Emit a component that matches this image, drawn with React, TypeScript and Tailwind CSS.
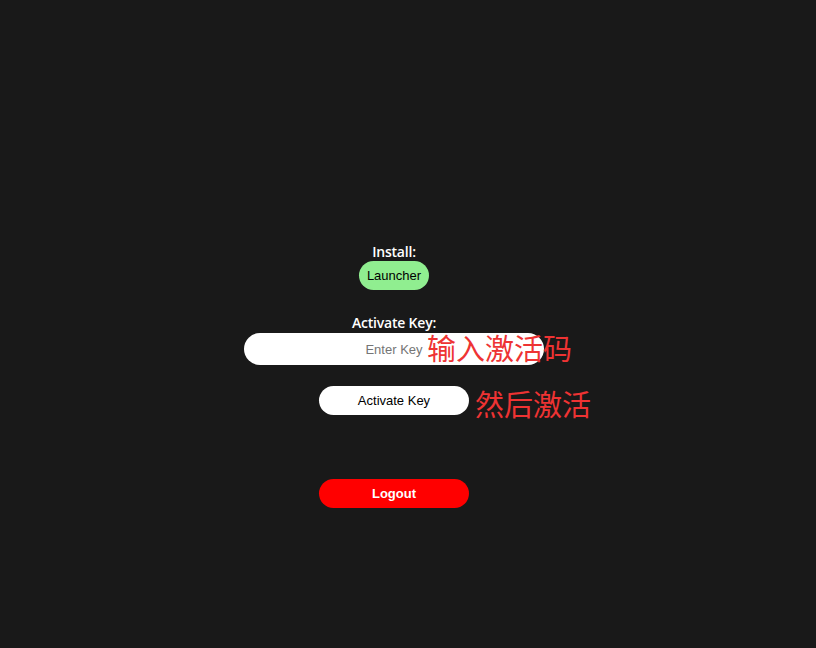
import { useState } from 'react'

const LABEL_FONT = { fontFamily: '"Open Sans", "Noto Sans", sans-serif' }

export default function App() {
  const [key, setKey] = useState('')

  return (
    <div className="min-h-[648px] w-full bg-[#191919] flex flex-col items-center pt-[242px] pr-[28px] font-['Liberation_Sans',Arial,sans-serif]">
      {/* install */}
      <div className="text-white text-[14px] font-semibold leading-[19px] tracking-[-0.2px]" style={LABEL_FONT}>
        Install:
      </div>
      <button className="h-[29px] w-[70px] rounded-full bg-[#90ee90] text-[13px] text-black font-['Liberation_Sans']">
        Launcher
      </button>

      {/* activate */}
      <div className="mt-[23px] text-white text-[14px] font-semibold leading-[20px] tracking-[-0.2px]" style={LABEL_FONT}>
        Activate Key:
      </div>
      <div className="relative">
        <input
          type="text"
          value={key}
          onChange={(e) => setKey(e.target.value)}
          placeholder="Enter Key"
          className="block h-[32px] w-[300px] rounded-full bg-white text-center text-[13px] text-black placeholder:text-[#757575] outline-none font-['Liberation_Sans']"
        />
        <span className="absolute left-[183px] top-[-5px] whitespace-nowrap text-[29px] leading-[38px] text-[#ee3333] font-['Noto_Sans_CJK_SC',sans-serif]">
          输入激活码
        </span>
      </div>

      <div className="relative mt-[21px]">
        <button className="h-[29px] w-[150px] rounded-full bg-white text-[13px] text-black font-['Liberation_Sans']">
          Activate Key
        </button>
        <span className="absolute left-[156px] top-[-2px] whitespace-nowrap text-[29px] leading-[38px] text-[#ee3333] font-['Noto_Sans_CJK_SC',sans-serif]">
          然后激活
        </span>
      </div>

      {/* logout */}
      <button className="mt-[64px] h-[29px] w-[150px] rounded-full bg-[#ff0000] text-[13px] font-bold text-white font-['Liberation_Sans']">
        Logout
      </button>
    </div>
  )
}
